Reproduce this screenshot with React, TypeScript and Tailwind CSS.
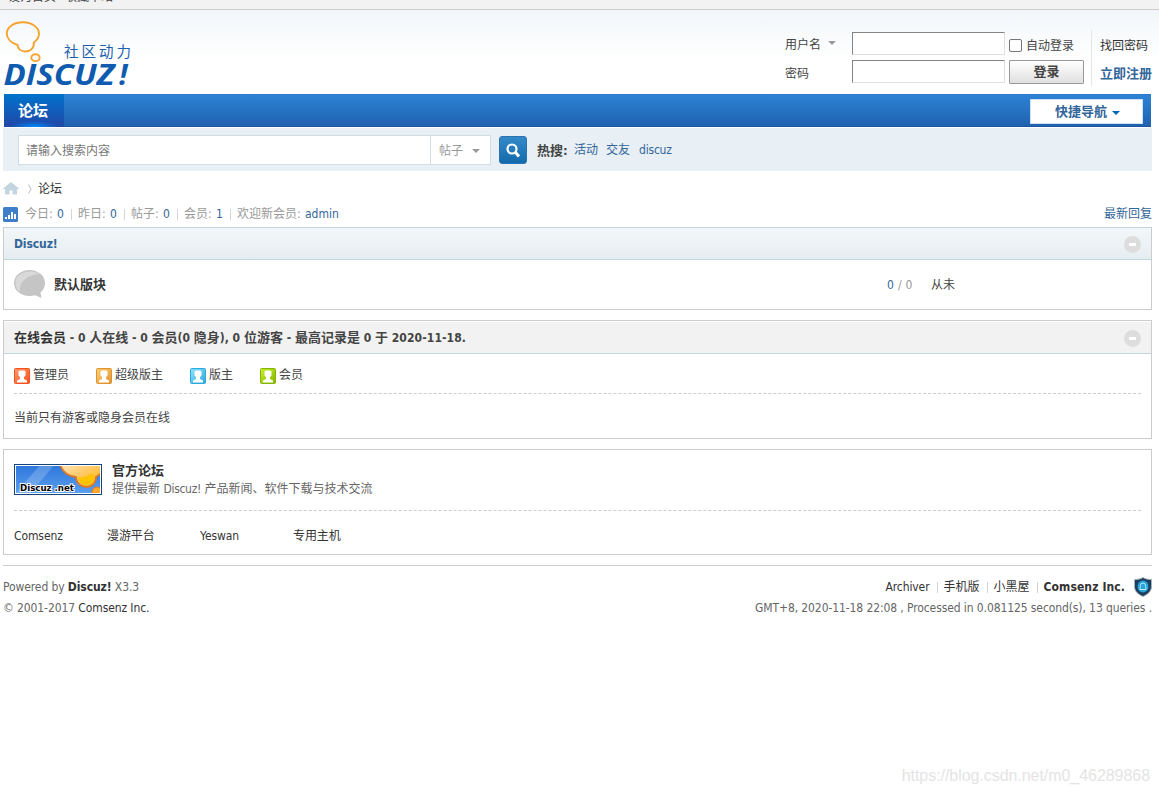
import type { ReactNode } from "react";

const roles = [
  { name: "管理员", width: "w-[82px]", light: "#ff9a6b", dark: "#f4511e" },
  { name: "超级版主", width: "w-[94px]", light: "#ffcf7a", dark: "#e0942f" },
  { name: "版主", width: "w-[70px]", light: "#8fe3fb", dark: "#2ba9dc" },
  { name: "会员", width: "w-[60px]", light: "#c5f22c", dark: "#86b500" },
];

const friendLinks = ["Comsenz", "漫游平台", "Yeswan", "专用主机"];

function Pipe() {
  return <span className="mr-[6px] ml-[7px] h-[11px] w-px bg-[#d4d4d4]" />;
}

function Caret({ className }: { className: string }) {
  return (
    <svg width="8" height="4" viewBox="0 0 8 4" className={className}>
      <path d="M0 0h8L4 4z" fill="currentColor" />
    </svg>
  );
}

function Logo() {
  return (
    <svg width="132" height="76" viewBox="0 0 132 76" className="ml-[2px] mt-[10px]">
      <g fill="none" stroke="#f5a32f" strokeWidth="1.9">
        <path d="M15.500 25C9 23 4.800 18.500 4.800 13.500C4.800 7 12 2.300 21 2.300S37 7.500 37 13.500C37 17 35.500 20 31.800 22.500C32.500 28 28 31.500 23.500 31.500C19 31.500 16 29 15.500 25z" />
        <ellipse cx="33.500" cy="37.700" rx="4.200" ry="3.400" />
      </g>
      <text x="62" y="36.500" fontSize="14.500" letterSpacing="3" fill="#1a5fae" fontFamily="Noto Sans CJK SC, sans-serif">
        社区动力
      </text>
      <g fill="#0f5bb0" fontFamily="Open Sans, sans-serif" fontWeight="700" fontStyle="italic" fontSize="28">
        <text x="1.500" y="65" textLength="111" lengthAdjust="spacingAndGlyphs">DISCUZ</text>
        <text x="117" y="65" fontSize="29" textLength="8.500" lengthAdjust="spacingAndGlyphs">!</text>
      </g>
    </svg>
  );
}

function Banner() {
  return (
    <svg width="88" height="31" viewBox="0 0 88 31" className="block">
      <defs>
        <linearGradient id="sky" x1="0" y1="0" x2="0" y2="1">
          <stop offset="0" stopColor="#2f78dc" />
          <stop offset="1" stopColor="#5a9eee" />
        </linearGradient>
        <linearGradient id="sun" x1="0" y1="0" x2="1" y2="1">
          <stop offset="0" stopColor="#ffe9c8" />
          <stop offset="0.500" stopColor="#ffc965" />
          <stop offset="1" stopColor="#ffb000" />
        </linearGradient>
        <clipPath id="inner">
          <rect x="2" y="2" width="84" height="27" />
        </clipPath>
      </defs>
      <rect width="88" height="31" fill="#17447e" />
      <rect x="1" y="1" width="86" height="29" fill="#fff" />
      <g clipPath="url(#inner)">
        <rect x="2" y="2" width="84" height="27" fill="url(#sky)" />
        <path d="M27 0h14L15 31H0z" fill="#fff" opacity="0.200" />
        <path d="M46 0C48 7 53 12 62 13C62 19 67 23 73 23C79 22 82 18 82 13L90 7V-3H46z" fill="url(#sun)" stroke="#df7a24" strokeWidth="1.800" />
        <path d="M64 13C70 15 76 9 80 10C81 17 78 21 72 21C67 20 65 18 64 13z" fill="#ffc400" />
        <circle cx="83" cy="28" r="5" fill="#ffa72b" stroke="#df7a24" />
      </g>
      <text x="6" y="27" fontSize="9" fontWeight="700" fontFamily="DejaVu Sans, sans-serif" textLength="54" lengthAdjust="spacingAndGlyphs" stroke="#fff" strokeWidth="2" paintOrder="stroke" fill="#000">
        Discuz .net
      </text>
    </svg>
  );
}

function RoleIcon({ light, dark }: { light: string; dark: string }) {
  const id = "role" + dark.slice(1);
  return (
    <svg width="16" height="16" viewBox="0 0 16 16" className="mt-[2px] mr-[3px]">
      <linearGradient id={id} x1="0" y1="0" x2="1" y2="1">
        <stop offset="0" stopColor={light} />
        <stop offset="1" stopColor={dark} />
      </linearGradient>
      <rect x="0.500" y="0.500" width="15" height="15" rx="1" fill={`url(#${id})`} stroke={dark} />
      <path d="M6 2.500h4.500l1 1v4L10 9v2l3 1.500v2H3v-2L6 11V9L4.500 7.500v-4z" fill="#fff" />
    </svg>
  );
}

function Collapse() {
  return (
    <span className="mt-[2px] mr-[10px] flex h-[17px] w-[17px] items-center justify-center rounded-full bg-[#ddd]">
      <span className="h-[3px] w-[7px] bg-white" />
    </span>
  );
}

function Stat({ label, children }: { label: string; children: ReactNode }) {
  return (
    <span className="whitespace-pre text-[#999]">
      {label}: <span className="ml-px text-[#336699]">{children}</span>
    </span>
  );
}

function Header() {
  return (
    <header className="flex h-[84px] justify-between bg-linear-to-b from-[#f2f6fa] to-white to-60%">
      <Logo />
      <div className="mr-[7px] flex pt-[20px]">
        <div className="flex w-[67px] flex-col pt-[5px]">
          <span className="flex h-[20px] items-center">
            用户名
            <Caret className="mb-[5px] ml-[7px] text-[#999]" />
          </span>
          <span className="mt-[9px] h-[20px] leading-[20px]">密码</span>
        </div>
        <div className="flex w-[157px] flex-col gap-[5px] pt-[2px]">
          <input className="h-[23px] w-[153px] border border-t-[#848484] border-r-[#e0e0e0] border-b-[#e0e0e0] border-l-[#848484] bg-white" />
          <input type="password" className="h-[23px] w-[153px] border border-t-[#848484] border-r-[#e0e0e0] border-b-[#e0e0e0] border-l-[#848484] bg-white" />
        </div>
        <div className="flex w-[82px] flex-col">
          <label className="flex h-[30px] items-center pt-[1px]">
            <span className="mr-[4px] h-[13px] w-[13px] rounded-[2px] border border-[#767676] bg-white" />
            自动登录
          </label>
          <button className="h-[24px] w-[75px] rounded-[1px] border border-[#999] bg-linear-to-b from-white to-[#e0e0e0] text-[13px] leading-[22px] font-bold">
            登录
          </button>
        </div>
        <div className="flex h-[56px] w-[61px] flex-col border-l border-[#e5e5e5] pl-[8px] text-[#333]">
          <a className="mt-[6px] h-[20px] leading-[20px]">找回密码</a>
          <a className="mt-[8px] h-[20px] text-[13px] leading-[20px] font-bold whitespace-nowrap text-[#336699]">立即注册</a>
        </div>
      </div>
    </header>
  );
}

function Nav() {
  return (
    <nav className="mr-[8px] ml-[4px] flex h-[33px] justify-between border-t border-b border-t-[#2b7acd] border-b-[#1d56a0] bg-linear-to-b from-[#2d82d5] to-[#2062b0]">
      <a className="-mt-px h-[33px] w-[60px] bg-[radial-gradient(ellipse_24px_6px_at_50%_100%,#008cff,transparent),linear-gradient(#0073cc,#2247a8)] pl-[14px] text-[15px] leading-[34px] font-bold text-white">
        论坛
      </a>
      <a className="mt-[4px] mr-[8px] flex h-[25px] w-[113px] items-center justify-center border border-[#cde0f0] bg-white pl-[2px] text-[13px] font-bold text-[#336699]">
        快捷导航
        <Caret className="mt-[2px] ml-[5px] text-[#0066b3]" />
      </a>
    </nav>
  );
}

function SearchBar() {
  return (
    <div className="mt-px mr-[7px] ml-[3px] flex h-[43px] bg-[#e8eff5] pt-[7px] pl-[15px]">
      <div className="flex h-[30px] w-[473px] border border-[#cfdde4] bg-white">
        <span className="w-[412px] border-r border-[#cfdde4] pl-[7px] leading-[31px] text-[#777]">请输入搜索内容</span>
        <span className="flex items-center pt-[2px] pl-[8px] text-[#999]">
          帖子
          <Caret className="ml-[9px] mb-px" />
        </span>
      </div>
      <button className="mt-px ml-[8px] flex h-[28px] w-[28px] items-center justify-center rounded-[3px] border border-[#2873b0] bg-linear-to-b from-[#348ac9] to-[#116bac]">
        <svg width="14" height="15" viewBox="0 0 14 15" fill="none" stroke="#fff">
          <circle cx="6" cy="6" r="4.500" strokeWidth="2.200" />
          <path d="M9 9l4 4.500" strokeWidth="3" />
        </svg>
      </button>
      <div className="ml-[10px] flex h-[30px] leading-[31px] whitespace-nowrap text-[#336699]">
        <b className="w-[37px] text-[13px] text-[#444]">热搜:</b>
        <a className="w-[32px]">活动</a>
        <a className="w-[33px]">交友</a>
        <a className="leading-[30px] tracking-[-0.2px]">discuz</a>
      </div>
    </div>
  );
}

function Stats() {
  return (
    <div className="mr-[7px] ml-[3px] flex h-[22px] items-center">
      <svg width="15" height="15" viewBox="0 0 15 15" className="mr-[7px]">
        <rect width="15" height="15" rx="1.500" fill="#3f7fca" />
        <path d="M2 10h2v2H2zM5 8h2v4H5zM8 5h2v7H8zM11 7h2v5h-2z" fill="#fff" />
      </svg>
      <Stat label="今日">0</Stat>
      <Pipe />
      <Stat label="昨日">0</Stat>
      <Pipe />
      <Stat label="帖子">0</Stat>
      <Pipe />
      <Stat label="会员">1</Stat>
      <Pipe />
      <Stat label="欢迎新会员">admin</Stat>
      <a className="ml-auto text-[#336699]">最新回复</a>
    </div>
  );
}

export default function App() {
  return (
    <div className="relative h-[794px] w-[1159px] overflow-hidden bg-white font-['DejaVu_Sans_Condensed','Noto_Sans_CJK_SC',sans-serif] text-[12px] leading-[18px] text-[#444]">
      {/* Toolbar, scrolled almost out of view */}
      <div className="flex h-[10px] items-start overflow-hidden border-b border-[#cdcdcd] bg-[#f2f2f2] pl-[8px]">
        <div className="-mt-[12px] flex gap-[9px] leading-[18px]">
          <span>设为首页</span>
          <span>收藏本站</span>
        </div>
      </div>

      <Header />
      <Nav />
      <SearchBar />

      {/* Breadcrumb */}
      <div className="ml-[3px] flex h-[32px] items-center pt-[3px] text-[#333]">
        <svg width="16" height="13" viewBox="0 0 16 13" fill="#c3d5e0">
          <path d="M8 0l8 6.500-1 1-1-.7V12.500H9.500V8.500h-3v4H2V6.800l-1 .7-1-1z" />
        </svg>
        <svg width="4" height="10" viewBox="0 0 4 10" className="mr-[6px] ml-[9px]" fill="none" stroke="#bbb">
          <path d="M.5.5l2.500 4.500-2.500 4.500" />
        </svg>
        论坛
      </div>

      <Stats />

      <main className="mt-[2px] mr-[7px] ml-[3px]">
        {/* Forum category */}
        <section className="h-[83px] border border-[#ccc] border-t-[#c2d5e3]">
          <div className="flex h-[32px] items-center justify-between border-b border-[#c2d5e3] bg-linear-to-b from-[#f3f7f9] to-[#e6edf1] pl-[10px]">
            <b className="tracking-[-0.1px] text-[#336699]">Discuz!</b>
            <Collapse />
          </div>
          <div className="flex h-[49px] items-center pl-[10px]">
            <svg width="32" height="29" viewBox="0 0 32 29">
              <path d="M15.500 0C7 0 0 5.500 0 13s6.500 13 15.500 13c2 0 4-.3 5.500-.8L27.500 28l-1-5.500C29.500 20 31 17 31 13C31 5.500 24 0 15.500 0z" fill="#c5c5c5" />
              <path d="M6 22C4.500 12 13 5 26 4C19-1 1 1 1.500 13C1.500 17 3 20 6 22z" fill="#d9d9d9" />
            </svg>
            <b className="ml-[8px] w-[833px] text-[13px] text-[#333]">默认版块</b>
            <span className="w-[44px] tracking-[0.3px] text-[#999]">
              <span className="text-[#336699]">0</span> / 0
            </span>
            <span>从未</span>
          </div>
        </section>

        {/* Online members */}
        <section className="mt-[10px] h-[119px] border border-[#ccc]">
          <div className="flex h-[33px] items-center justify-between border-t border-b border-t-white border-b-[#c2d5e3] bg-[#f2f2f2] pl-[10px]">
            <b className="w-[460px] whitespace-nowrap">
              <span className="text-[13px] text-[#333]">在线会员</span> - 0 <span className="text-[13px]">人在线</span> - 0{" "}
              <span className="text-[13px]">会员</span>(0 <span className="text-[13px]">隐身</span>), 0{" "}
              <span className="text-[13px]">位游客</span> - <span className="text-[13px]">最高记录是</span> 0{" "}
              <span className="text-[13px]">于</span> <span className="tracking-[0.1px]">2020-11-18.</span>
            </b>
            <Collapse />
          </div>
          <div className="mx-[10px] flex h-[40px] items-center border-b border-dashed border-[#ccc] pt-[2px]">
            {roles.map((role) => (
              <span key={role.name} className={`flex items-center ${role.width}`}>
                <RoleIcon light={role.light} dark={role.dark} />
                {role.name}
              </span>
            ))}
          </div>
          <p className="ml-[10px] leading-[48px]">当前只有游客或隐身会员在线</p>
        </section>

        {/* Friend links */}
        <section className="mt-[10px] h-[106px] border border-[#ccc] px-[10px]">
          <div className="flex h-[61px] border-b border-dashed border-[#ccc] pt-[14px]">
            <Banner />
            <div className="-mt-[2px] ml-[10px]">
              <b className="block text-[13px] text-[#333]">官方论坛</b>
              <p className="text-[#666]">
                提供最新 <span className="tracking-[-0.3px]">Discuz!</span> 产品新闻、软件下载与技术交流
              </p>
            </div>
          </div>
          <div className="flex text-[#333]">
            {friendLinks.map((link) => (
              <a key={link} className="h-[44px] w-[93px] leading-[50px] tracking-[-0.1px]">{link}</a>
            ))}
          </div>
        </section>

        <footer className="mt-[10px] flex justify-between border-t border-[#ccc] pt-[11px] leading-[21px] tracking-[-0.1px] text-[#666]">
          <div>
            <p className="h-[21px]">
              Powered by <b className="text-[#333]">Discuz!</b> X3.3
            </p>
            <p className="h-[21px]">
              © 2001-2017 <span className="text-[#333]">Comsenz Inc.</span>
            </p>
          </div>
          <div className="flex flex-col items-end">
            <div className="flex h-[21px] items-center text-[#333]">
              <span>Archiver</span>
              <Pipe />
              <span className="tracking-normal">手机版</span>
              <Pipe />
              <span className="tracking-normal">小黑屋</span>
              <Pipe />
              <b className="tracking-[0.1px]">Comsenz Inc.</b>
              <svg width="18" height="20" viewBox="0 0 18 20" className="mb-[2px] ml-[9px]">
                <path d="M9 .5c2.500 1.500 5 2 8.500 2v7c0 5-4 8-8.500 10C4.500 17.500.5 14.500.5 9.500v-7C4 2.500 6.500 2 9 .5z" fill="#1c3f5d" stroke="#aab4bd" />
                <ellipse cx="9" cy="9.500" rx="5.500" ry="6" fill="#25a3dc" />
                <path d="M6 12.500c0-2 .5-2 .5-4a2.500 2.500 0 0 1 5 0c0 2 .5 2 .5 4z" fill="none" stroke="#c5edff" />
              </svg>
            </div>
            <p className="h-[21px] whitespace-nowrap">GMT+8, 2020-11-18 22:08 , Processed in 0.081125 second(s), 13 queries .</p>
          </div>
        </footer>
      </main>

      {/* Watermark floats over the page */}
      <div className="absolute right-[9px] bottom-[8px] font-['Liberation_Sans',sans-serif] text-[16px] leading-[20px] tracking-[-0.05px] text-[#e4e4e4]">
        https://blog.csdn.net/m0_46289868
      </div>
    </div>
  );
}
